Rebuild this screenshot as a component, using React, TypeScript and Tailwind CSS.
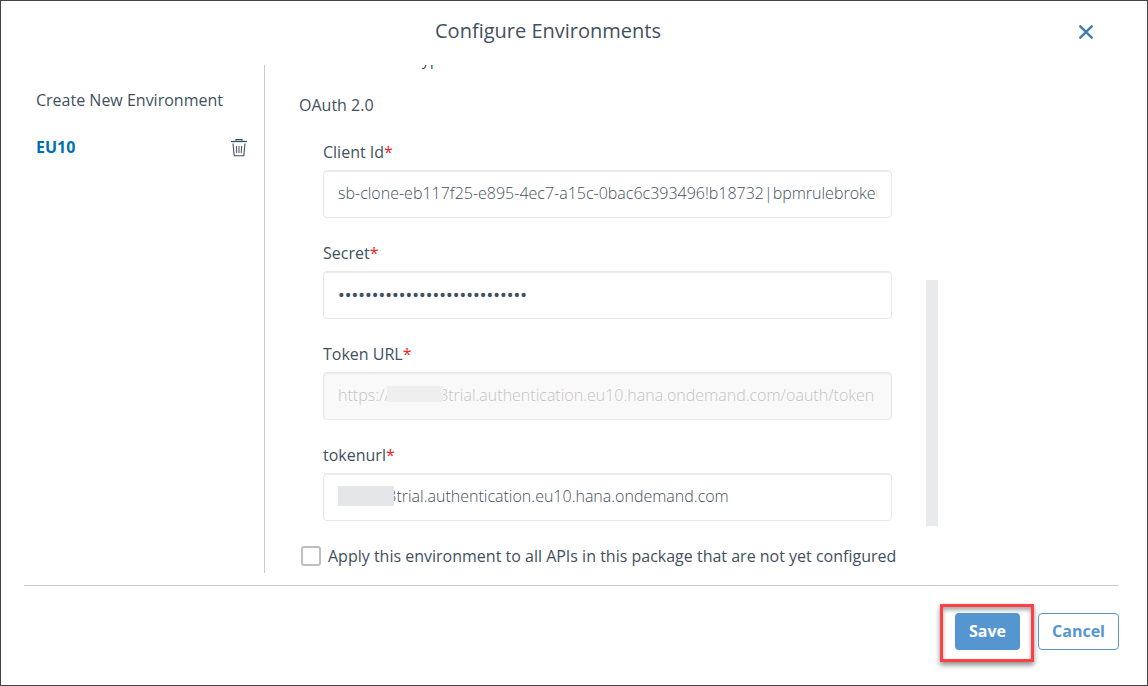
import type { ReactNode } from "react";

type FieldProps = {
  id: string;
  label: string;
  value: string;
  type?: "text" | "password";
  disabled?: boolean;
  mask?: ReactNode;
};

function Field({ id, label, value, type = "text", disabled = false, mask }: FieldProps) {
  return (
    <div>
      <label htmlFor={id} className="mb-1.5 block">
        {label}
        <span className="text-[#ee2222]">*</span>
      </label>
      <div className="relative">
        <input
          id={id}
          type={type}
          defaultValue={value}
          disabled={disabled}
          className={
            type === "password"
              ? "block h-12 w-full rounded border border-[#e8e9ea] px-[14px] font-['Roboto',sans-serif] text-xl text-[#3f5161] shadow-[inset_0_1px_1px_#ececee]"
              : "block h-12 w-full rounded border border-[#e8e9ea] px-[14px] pb-0.5 font-light text-[#3f5161] shadow-[inset_0_1px_1px_#ececee] disabled:bg-[#f9f9f9] disabled:text-[#c4c4c4]"
          }
        />
        {mask}
      </div>
    </div>
  );
}

function TrashIcon() {
  return (
    <svg viewBox="0 0 16 18" className="h-[18px] w-4" fill="none" stroke="#3f5161" aria-hidden="true">
      <path d="M0 2.5h16" strokeWidth="1.3" />
      <path d="M5 1.8V.7h6v1.1" strokeWidth="1.2" />
      <path d="M2 4.5l1.2 12.3h9.6L14 4.5" strokeWidth="1.1" />
      <path d="M5.3 7l.5 7M8 7v7M10.7 7l-.5 7" strokeWidth="1" />
    </svg>
  );
}

export default function App() {
  return (
    <div className="flex min-h-screen flex-col border border-[#444] bg-white pr-7 pl-[23px] font-['Open_Sans',sans-serif] text-base leading-6 text-[#3f5161]">
      <header className="flex h-16 items-center pb-1">
        <h1 className="flex-1 text-center text-xl leading-7">Configure Environments</h1>
        <button type="button" aria-label="Close" className="mt-0.5 mr-[25px] ml-1.5 flex size-4 items-center justify-center">
          <svg viewBox="0 0 14 14" className="size-3.5" fill="none" stroke="#427cac" strokeWidth="2.4" strokeLinecap="round" aria-hidden="true">
            <path d="M1.3 1.3l11.4 11.4M12.7 1.3L1.3 12.7" />
          </svg>
        </button>
      </header>

      <main className="flex">
        <nav className="w-[241px] shrink-0 border-r border-[#ccc] pt-[23px] pr-[17px] pl-3">
          <a href="#new" className="block">Create New Environment</a>
          <div className="mt-[23px] flex items-center justify-between">
            <a href="#eu10" className="font-bold text-[#0070b1]">EU10</a>
            <button type="button" aria-label="Delete EU10" className="pt-0.5">
              <TrashIcon />
            </button>
          </div>
        </nav>

        <section className="min-w-0 max-w-[673px] flex-1">
          <div className="flex h-[461px] items-end overflow-hidden">
            <form className="min-w-0 flex-1 pr-[34px] pb-[5px] pl-[34px]">
              <p>Authentication Type</p>
              <p className="mt-[22px]">OAuth 2.0</p>
              <div className="mt-[23px] flex flex-col gap-[23px] pl-6">
                <Field id="client-id" label="Client Id" value="sb-clone-eb117f25-e895-4ec7-a15c-0bac6c393496!b18732|bpmrulebroker" />
                <Field id="secret" label="Secret" type="password" value="0000000000000000000000000000" />
                <Field
                  id="token-url"
                  label="Token URL"
                  value="https://i000003trial.authentication.eu10.hana.ondemand.com/oauth/token"
                  disabled
                  mask={<span className="absolute top-3.5 left-16 h-4 w-14 bg-[#efefef]" />}
                />
                <Field
                  id="tokenurl"
                  label="tokenurl"
                  value="i000003trial.authentication.eu10.hana.ondemand.com"
                  mask={<span className="absolute top-[13px] left-[15px] h-5 w-14 bg-[#e4e7ea]" />}
                />
              </div>
            </form>
            <div className="h-[246px] w-3 shrink-0 bg-[#e8eaec]" />
          </div>
          <label className="mt-[18px] mb-[5px] flex items-center gap-[7px] pl-9">
            <input type="checkbox" className="size-5 shrink-0 appearance-none rounded-[3px] border-2 border-[#bfbfbf] bg-white" />
            Apply this environment to all APIs in this package that are not yet configured
          </label>
        </section>
      </main>

      <footer className="mt-3 flex items-start justify-end gap-1 border-t border-[#ccc] pt-[18px] font-bold">
        <div className="border-[3px] border-[#fb4143] pt-1.5 pr-[11px] pb-[9px] pl-3 shadow-[0_3px_5px_rgba(0,0,0,0.45),inset_0_3px_4px_rgba(0,0,0,0.35)]">
          <button type="submit" className="block h-[37px] w-[65px] rounded bg-[#5596d0] pb-0.5 text-white">Save</button>
        </div>
        <button type="button" className="mt-[9px] h-[37px] w-[81px] rounded border border-[#5596d0] bg-white pb-0.5 text-[#5596d0]">
          Cancel
        </button>
      </footer>
    </div>
  );
}
